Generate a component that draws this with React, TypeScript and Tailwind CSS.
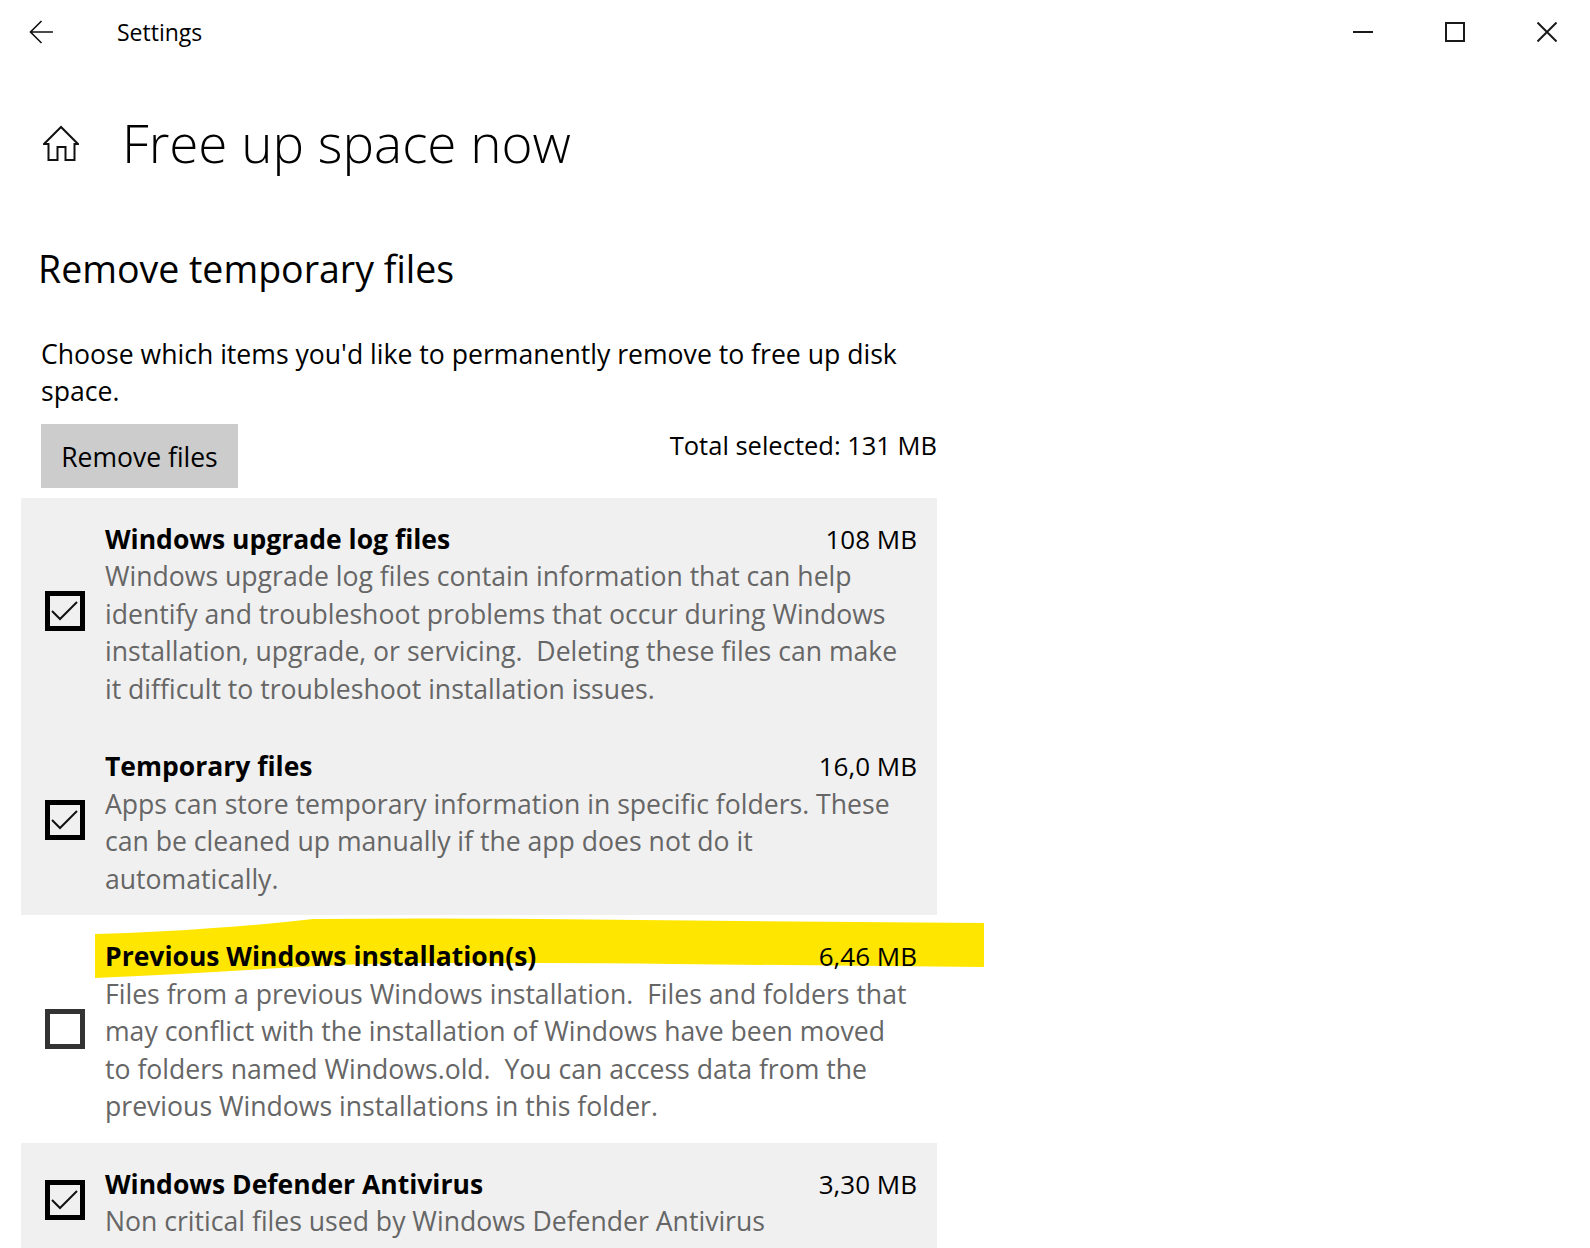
type Row = {
  title: string;
  size: string;
  lines: string[];
  checked: boolean;
  shaded: boolean;
  highlight?: boolean;
};

const rows: Row[] = [
  {
    title: "Windows upgrade log files",
    size: "108 MB",
    lines: [
      "Windows upgrade log files contain information that can help",
      "identify and troubleshoot problems that occur during Windows",
      "installation, upgrade, or servicing.  Deleting these files can make",
      "it difficult to troubleshoot installation issues.",
    ],
    checked: true,
    shaded: true,
  },
  {
    title: "Temporary files",
    size: "16,0 MB",
    lines: [
      "Apps can store temporary information in specific folders. These",
      "can be cleaned up manually if the app does not do it",
      "automatically.",
    ],
    checked: true,
    shaded: true,
  },
  {
    title: "Previous Windows installation(s)",
    size: "6,46 MB",
    lines: [
      "Files from a previous Windows installation.  Files and folders that",
      "may conflict with the installation of Windows have been moved",
      "to folders named Windows.old.  You can access data from the",
      "previous Windows installations in this folder.",
    ],
    checked: false,
    shaded: false,
    highlight: true,
  },
  {
    title: "Windows Defender Antivirus",
    size: "3,30 MB",
    lines: ["Non critical files used by Windows Defender Antivirus"],
    checked: true,
    shaded: true,
  },
];

export default function App() {
  return (
    <div className="h-[1248px] w-[1590px] overflow-hidden bg-white font-['Open_Sans',sans-serif] text-black">
      {/* Title bar */}
      <div className="flex h-[64px] items-center">
        <svg className="ml-[29px] size-[24px]" viewBox="0 0 24 24" fill="none" stroke="#111111" strokeWidth="1.6">
          <path d="M24 12H2M12.5 1L1.5 12L12.5 23" />
        </svg>
        <span className="ml-[64px] text-[23px]">Settings</span>
        <div className="ml-auto flex items-center gap-[72px] pr-[33px]">
          <svg className="size-[20px]" viewBox="0 0 20 20" fill="none" stroke="#1a1a1a" strokeWidth="2">
            <path d="M0 10H20" />
          </svg>
          <svg className="size-[20px]" viewBox="0 0 20 20" fill="none" stroke="#1a1a1a" strokeWidth="2">
            <path d="M1 1H19V19H1Z" />
          </svg>
          <svg className="size-[20px]" viewBox="0 0 20 20" fill="none" stroke="#1a1a1a" strokeWidth="2">
            <path d="M0.5 0.5L19.5 19.5M19.5 0.5L0.5 19.5" />
          </svg>
        </div>
      </div>

      {/* Page heading */}
      <div className="mt-[39px] flex h-[80px] items-center">
        <svg className="ml-[43px] h-[36px] w-[36px]" viewBox="0 0 36 36" fill="none" stroke="#111111" strokeWidth="2">
          <path d="M18 2L1 19H5.5V35H14.5V22H22.5V35H31.5V19H35Z" />
        </svg>
        <h1 className="ml-[43px] text-[53px] font-light">Free up space now</h1>
      </div>

      <h2 className="mt-[62px] pl-[38px] text-[37.5px] leading-[48px]">Remove temporary files</h2>

      <p className="mt-[43px] pl-[41px] text-[26.6px] leading-[37.4px]">
        Choose which items you'd like to permanently remove to free up disk
        <br />
        space.
      </p>

      <div className="flex w-[937px] items-start justify-between pl-[41px]">
        <button className="mt-[13px] h-[64px] w-[197px] bg-[#cccccc] pt-[5px] text-[26.5px]">Remove files</button>
        <span className="mt-[16px] text-[25.5px] leading-[37.4px]">Total selected: 131 MB</span>
      </div>

      {/* File groups */}
      <div className="mt-[10px] ml-[21px] w-[916px]">
        {rows.map((row) => (
          <FileRow key={row.title} row={row} />
        ))}
      </div>
    </div>
  );
}

function FileRow({ row }: { row: Row }) {
  return (
    <div className={`relative flex items-center pt-[23px] pr-[20px] pb-[17px] pl-[24px] ${row.shaded ? "bg-[#f0f0f0]" : "bg-white"}`}>
      {row.highlight && <Highlight />}
      <div className={`-mt-[7px] size-[40px] shrink-0 border-[5px] ${row.checked ? "border-black" : "border-[#333333]"}`}>
        {row.checked && (
          <svg className="size-full" viewBox="0 0 30 30" fill="none" stroke="#111111" strokeWidth="2">
            <path d="M2 15L10 23L27 6" />
          </svg>
        )}
      </div>
      <div className="relative ml-[20px] flex-1 text-[26.6px] leading-[37.5px]">
        <div className="flex items-baseline justify-between">
          <span className="text-[26.5px] font-bold">{row.title}</span>
          <span className="text-[26px]">{row.size}</span>
        </div>
        {row.lines.map((line) => (
          <div key={line} className="whitespace-pre text-[#666666]">
            {line}
          </div>
        ))}
      </div>
    </div>
  );
}

function Highlight() {
  return (
    <svg className="absolute top-0 left-0 h-[70px] w-[970px]" viewBox="0 0 970 70">
      <path
        d="M74 19 Q140 17 192 13 Q250 9 292 4 Q400 3 519 4 Q620 5 719 6 L963 8 L963 52 L652 49 Q580 48 519 48 L392 48 Q320 49 259 53 Q170 59 74 63 Z"
        fill="#ffe600"
      />
    </svg>
  );
}
